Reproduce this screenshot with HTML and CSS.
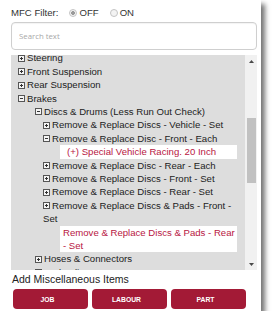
FILE: index.html
```html
<!DOCTYPE html>
<html>
<head>
<meta charset="utf-8">
<link rel="stylesheet" href="styles.css">
</head>
<body>
<div class="panel">
  <div class="filter">
    <span class="filter-label">MFC Filter:</span>
    <span class="radio checked"></span><span class="opt">OFF</span>
    <span class="radio"></span><span class="opt">ON</span>
  </div>
  <input class="search" type="text" placeholder="Search text">
  <div class="tree">
    <div class="tree-body">
      <ul class="root">
        <li><span class="pm plus"></span>Steering</li>
        <li><span class="pm plus"></span>Front Suspension</li>
        <li><span class="pm plus"></span>Rear Suspension</li>
        <li><span class="pm minus"></span>Brakes
          <ul class="l1">
            <li><span class="pm minus"></span>Discs &amp; Drums (Less Run Out Check)
              <ul class="l2">
                <li><span class="pm plus"></span>Remove &amp; Replace Discs - Vehicle - Set</li>
                <li><span class="pm minus"></span>Remove &amp; Replace Disc - Front - Each
                  <ul class="l3">
                    <li class="leaf special">(+) Special Vehicle Racing. 20 Inch</li>
                  </ul>
                </li>
                <li><span class="pm plus"></span>Remove &amp; Replace Disc - Rear - Each</li>
                <li><span class="pm plus"></span>Remove &amp; Replace Discs - Front - Set</li>
                <li><span class="pm plus"></span>Remove &amp; Replace Discs - Rear - Set</li>
                <li><span class="pm plus"></span>Remove &amp; Replace Discs &amp; Pads - Front - Set
                  <ul class="l3">
                    <li class="leaf">Remove &amp; Replace Discs &amp; Pads - Rear - Set</li>
                  </ul>
                </li>
              </ul>
            </li>
            <li><span class="pm plus"></span>Hoses &amp; Connectors</li>
            <li><span class="pm plus"></span>Hydraulic System</li>
          </ul>
        </li>
      </ul>
    </div>
    <div class="scrollbar">
      <div class="sb-btn"><svg width="5" height="3" viewBox="0 0 5 3"><polygon points="0,3 5,3 2.5,0" fill="#4a4a4a"/></svg></div>
      <div class="sb-track"><div class="sb-thumb"></div></div>
      <div class="sb-btn"><svg width="5" height="3" viewBox="0 0 5 3"><polygon points="0,0 5,0 2.5,3" fill="#4a4a4a"/></svg></div>
    </div>
  </div>
  <div class="misc">Add Miscellaneous Items</div>
  <div class="buttons">
    <button class="btn">JOB</button>
    <button class="btn">LABOUR</button>
    <button class="btn">PART</button>
  </div>
</div>
</body>
</html>
```
FILE: styles.css
```css
body {
  margin: 0;
  background: #fff;
  font-family: "Liberation Sans", Arial, sans-serif;
}
.panel {
  width: 261px;
  height: 311px;
  background: #fff;
  box-shadow: 4px 4px 5px rgba(0, 0, 0, 0.55);
  display: flex;
  flex-direction: column;
}
.filter {
  display: flex;
  align-items: center;
  padding: 6px 0 0 11px;
  height: 14px;
  font-size: 9.6px;
  line-height: 14px;
  color: #333;
}
.filter-label {
  margin-right: 11px;
}
.radio {
  width: 8px;
  height: 8px;
  box-sizing: border-box;
  border: 1px solid #c4c4c4;
  border-radius: 50%;
  background: #f3f3f3;
  margin-right: 2px;
}
.radio.checked {
  background: radial-gradient(circle, #9a9a9a 0, #9a9a9a 1.6px, #f3f3f3 2.2px);
}
.opt {
  margin-right: 11px;
}
.search {
  display: block;
  margin: 2px 0 0 11px;
  width: 246px;
  height: 28px;
  box-sizing: border-box;
  border: 1px solid #cfcfcf;
  border-radius: 4px;
  padding: 0 0 0 7px;
  font-family: "Open Sans", sans-serif;
  font-size: 7.8px;
  color: #333;
  outline: none;
  box-shadow: inset 0 1px 1px rgba(0, 0, 0, 0.05);
}
.search::placeholder {
  color: #a8a8a8;
}
.tree {
  margin: 5px 0 0 11px;
  width: 246px;
  height: 215px;
  display: flex;
}
.tree-body {
  flex: 1;
  background: #dddddd;
  overflow: hidden;
  font-size: 9.6px;
  line-height: 13.4px;
  color: #222;
}
ul {
  list-style: none;
  margin: 0;
  padding: 0;
}
.root {
  margin-top: -3.7px;
  padding: 0 8px 0 7px;
}
.l1 {
  padding-left: 17px;
}
.l2 {
  padding-left: 8px;
}
.l3 {
  padding-left: 17px;
}
.pm {
  display: inline-block;
  width: 7px;
  height: 7px;
  box-sizing: border-box;
  border: 1px solid #555;
  margin-right: 2px;
  vertical-align: -0.5px;
  background-color: #f4f4f4;
}
.pm.plus {
  background-image: linear-gradient(#333, #333), linear-gradient(#333, #333);
  background-size: 3px 1px, 1px 3px;
  background-position: center, center;
  background-repeat: no-repeat;
}
.pm.minus {
  background-image: linear-gradient(#333, #333);
  background-size: 3px 1px;
  background-position: center;
  background-repeat: no-repeat;
}
.leaf {
  background: #fff;
  color: #b8163f;
  padding: 0 0 0 3px;
}
.leaf.special {
  padding-left: 7px;
}
.scrollbar {
  width: 12px;
  background: #f1f1f1;
  display: flex;
  flex-direction: column;
}
.sb-btn {
  height: 12px;
  display: flex;
  align-items: center;
  justify-content: center;
}
.sb-track {
  flex: 1;
}
.sb-thumb {
  margin: 51px 1px 0 2px;
  height: 65px;
  background: #c1c1c1;
}
.misc {
  margin-top: 2px;
  padding-left: 12px;
  font-size: 10.5px;
  line-height: 14px;
  color: #222;
}
.buttons {
  display: flex;
  gap: 4px;
  margin: 3px 0 0 13px;
}
.btn {
  width: 75px;
  height: 20px;
  border: none;
  border-radius: 4px;
  background: #a31a36;
  color: #fff;
  font-family: "Liberation Sans", Arial, sans-serif;
  font-weight: bold;
  font-size: 6.8px;
  padding: 0 6px 0 0;
  display: flex;
  align-items: center;
  justify-content: center;
}
```
